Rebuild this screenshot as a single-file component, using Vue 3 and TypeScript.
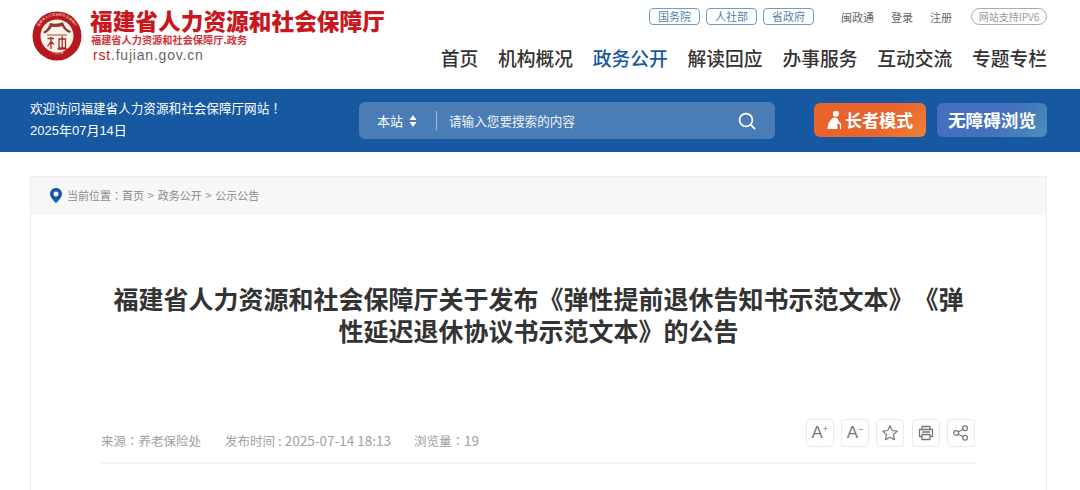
<template>
<div class="page">
  <header class="head">
    <div class="brand">
      <svg class="logo" viewBox="0 0 50 50" width="50" height="50">
        <circle cx="25" cy="25" r="24.5" fill="#b5181d" />
        <circle cx="25" cy="25" r="16.5" fill="#fbf3ea" />
        <defs>
          <path id="ring-top" d="M5.5 29 A20 20 0 1 1 44.5 29" />
          <path id="ring-bottom" d="M11 38 A20.5 20.5 0 0 0 39 38" />
        </defs>
        <text class="ring-text"><textPath href="#ring-top" startOffset="50%" text-anchor="middle">福建省人力资源和社会保障厅</textPath></text>
        <text class="ring-text"><textPath href="#ring-bottom" startOffset="50%" text-anchor="middle">人力社保</textPath></text>
        <path d="M11 21 C15 19 17 15 18 12 C22 13 27 13 31 11 C32 15 35 19 39 20 L38 22 C35 21.5 32 19 30 15 C27 16 23 16.5 20 15.5 C18.5 18.5 15.5 21.5 12.5 22.5 Z" fill="#8c3a32" />
        <path d="M15 24 H35" stroke="#8c3a32" stroke-width=".9" />
        <path d="M15.5 27.5 H22 M19 26 V38 M19 30.5 L15.5 35.5 M19 30.5 L22 33.5 M27 28 H33.5 V37 H27 Z M30.2 25 V37 M25.5 38 H35" stroke="#9e2a25" stroke-width="1.3" fill="none" />
      </svg>
      <div class="brand-text">
        <div class="brand-name">福建省人力资源和社会保障厅</div>
        <div class="brand-sub">福建省人力资源和社会保障厅.政务</div>
        <div class="brand-url"><span class="red">rst</span>.fujian.gov.cn</div>
      </div>
    </div>
    <div class="head-right">
      <div class="top-links">
        <a v-for="l in govLinks" :key="l" class="gov-link">{{ l }}</a>
        <a class="plain first">闽政通</a>
        <a class="plain">登录</a>
        <a class="plain">注册</a>
        <span class="ipv6">网站支持IPV6</span>
      </div>
      <nav class="nav">
        <a v-for="n in navItems" :key="n" :class="['nav-item', n === '政务公开' ? 'active' : '']">{{ n }}</a>
      </nav>
    </div>
  </header>

  <section class="band">
    <div class="welcome">
      <div>欢迎访问福建省人力资源和社会保障厅网站<span class="mid">！</span></div>
      <div class="date">2025年07月14日</div>
    </div>
    <div class="search">
      <span class="scope">本站</span>
      <svg class="updown" viewBox="0 0 8 12" width="8" height="12">
        <path d="M4 0 L7.5 5 H.5 Z M4 12 L.5 7 H7.5 Z" fill="#fff" />
      </svg>
      <span class="sep"></span>
      <span class="placeholder">请输入您要搜索的内容</span>
      <svg class="glass" viewBox="0 0 18 18" width="18" height="18">
        <circle cx="8" cy="8" r="6.4" fill="none" stroke="#fff" stroke-width="1.7" />
        <path d="M12.6 12.6 L16.6 16.6" stroke="#fff" stroke-width="1.8" stroke-linecap="round" />
      </svg>
    </div>
    <a class="mode elder">
      <svg viewBox="0 0 16 20" width="15" height="19">
        <circle cx="9.5" cy="3.8" r="3.2" fill="#fff" />
        <path d="M7 8 C10 7.5 12 9 12.5 12 L15 14.5 L15 20 H13.8 L13.8 15.5 L11 14 L11 20 H.5 C.5 15 3 10 7 8 Z" fill="#fff" />
      </svg>
      长者模式
    </a>
    <a class="mode access">无障碍浏览</a>
  </section>

  <main class="card">
    <div class="crumbs">
      <svg viewBox="0 0 12 15" width="12" height="15">
        <path fill-rule="evenodd" d="M6 0 C9.4 0 12 2.6 12 5.8 C12 9.5 8 13 6 15 C4 13 0 9.5 0 5.8 C0 2.6 2.6 0 6 0 Z M6 3.4 A2.5 2.5 0 1 0 6 8.4 A2.5 2.5 0 1 0 6 3.4 Z" fill="#1659a1" />
      </svg>
      <span>当前位置<span class="mid">：</span>首页 &gt; 政务公开 &gt; 公示公告</span>
    </div>
    <div class="article">
      <h1 class="title">福建省人力资源和社会保障厅关于发布《弹性提前退休告知书示范文本》《弹性延迟退休协议书示范文本》的公告</h1>
      <div class="meta">
        <span class="meta-item">来源<span class="mid">：</span>养老保险处</span>
        <span class="meta-item">发布时间<span class="num"> : 2025-07-14 18:13</span></span>
        <span class="meta-item views">浏览量<span class="mid">：</span><span class="num">19</span></span>
        <div class="tools">
          <button class="tool"><span class="a">A</span><sup>+</sup></button>
          <button class="tool"><span class="a">A</span><sup>−</sup></button>
          <button class="tool">
            <svg viewBox="0 0 18 18" width="18" height="18">
              <path d="M9 1.8 L11.2 6.5 L16.2 7.1 L12.5 10.6 L13.5 15.7 L9 13.2 L4.5 15.7 L5.5 10.6 L1.8 7.1 L6.8 6.5 Z" fill="none" stroke="#777" stroke-width="1.2" stroke-linejoin="round" />
            </svg>
          </button>
          <button class="tool">
            <svg viewBox="0 0 18 18" width="18" height="18">
              <path d="M5 5.5 V2.5 H13 V5.5 M5 12.5 H2.5 V5.5 H15.5 V12.5 H13 M5 10.5 H13 V15.5 H5 Z M5 8 H13" fill="none" stroke="#777" stroke-width="1.3" stroke-linejoin="round" />
            </svg>
          </button>
          <button class="tool">
            <svg viewBox="0 0 18 18" width="18" height="18">
              <circle cx="4.2" cy="9" r="2.4" fill="none" stroke="#777" stroke-width="1.2" />
              <circle cx="13" cy="4.2" r="2.4" fill="none" stroke="#777" stroke-width="1.2" />
              <circle cx="13" cy="13.8" r="2.4" fill="none" stroke="#777" stroke-width="1.2" />
              <path d="M6.3 7.9 L10.9 5.3 M6.3 10.1 L10.9 12.7" stroke="#777" stroke-width="1.2" />
            </svg>
          </button>
        </div>
      </div>
    </div>
  </main>
</div>
</template>

<script setup lang="ts">
const govLinks: string[] = ['国务院', '人社部', '省政府'];
const navItems: string[] = ['首页', '机构概况', '政务公开', '解读回应', '办事服务', '互动交流', '专题专栏'];
</script>

<style>
html, body {
  margin: 0;
  background: #fff;
  overflow: hidden;
}
</style>

<style scoped>
.page {
  width: 1080px;
  height: 490px;
  overflow: hidden;
  font-family: "Noto Sans CJK SC", "Liberation Sans", sans-serif;
  color: #333;
  text-spacing-trim: space-all;
}
.mid {
  font-family: "Noto Sans CJK TC", sans-serif;
}
.head {
  display: flex;
  justify-content: space-between;
  height: 89px;
  padding: 0 33px 0 32px;
}
.brand {
  display: flex;
  gap: 8px;
  padding-top: 11px;
}
.logo {
  flex: none;
}
.ring-text {
  font-size: 3.4px;
  fill: #f6dcc0;
}
.brand-text {
  margin-top: -4px;
}
.brand-name {
  font-family: "Noto Sans CJK SC", serif;
  font-size: 22.7px;
  line-height: 27px;
  font-weight: 900;
  color: #c8171e;
  white-space: nowrap;
}
.brand-sub {
  margin-left: 1px;
  font-size: 10.2px;
  line-height: 12px;
  font-weight: 700;
  color: #d0343a;
  white-space: nowrap;
}
.brand-url {
  margin: 1px 0 0 3px;
  font-family: "Liberation Sans", sans-serif;
  font-size: 14px;
  line-height: 16px;
  letter-spacing: .8px;
  color: #666;
}
.red {
  color: #c8171e;
}
.head-right {
  display: flex;
  flex-direction: column;
  align-items: flex-end;
}
.top-links {
  display: flex;
  align-items: center;
  height: 17px;
  margin-top: 8px;
  font-size: 11px;
}
.gov-link {
  width: 51px;
  height: 17px;
  box-sizing: border-box;
  margin-right: 6px;
  border: 1px solid #6f9ccc;
  border-radius: 4px;
  color: #557fa8;
  line-height: 14px;
  text-align: center;
}
.plain {
  color: #666;
  margin-right: 17px;
}
.plain.first {
  margin-left: 21px;
}
.ipv6 {
  width: 76px;
  height: 17px;
  box-sizing: border-box;
  margin-left: 2px;
  border: 1px solid #aaa;
  border-radius: 9px;
  color: #999;
  font-size: 10px;
  line-height: 15px;
  text-align: center;
}
.nav {
  display: flex;
  gap: 19.8px;
  margin-top: 19px;
}
.nav-item {
  font-size: 18.75px;
  line-height: 28px;
  font-weight: 500;
  color: #333;
}
.nav-item.active {
  color: #1659a1;
}
.band {
  display: flex;
  align-items: center;
  height: 63px;
  padding: 0 33px 0 30px;
  background: #1659a1;
  color: #fff;
}
.welcome {
  width: 329px;
  margin-bottom: 2px;
  font-size: 12.6px;
  line-height: 22px;
}
.date {
  margin-top: 1px;
  font-family: "Liberation Sans", "Noto Sans CJK SC", sans-serif;
  font-size: 13px;
}
.search {
  display: flex;
  align-items: center;
  width: 416px;
  height: 37px;
  box-sizing: border-box;
  padding: 0 19px 0 18px;
  border-radius: 6px;
  background: #4a7cb5;
  font-size: 13px;
}
.updown {
  margin-left: 6px;
}
.sep {
  width: 1px;
  height: 19px;
  margin: 0 12px 0 19px;
  background: #9fbbd9;
}
.placeholder {
  flex: 1;
  font-size: 12.6px;
  color: #f0f4f9;
}
.mode {
  display: flex;
  align-items: center;
  justify-content: center;
  height: 34px;
  margin: 0 0 2px 11px;
  border-radius: 6px;
  font-weight: 700;
  color: #fff;
}
.elder {
  width: 112px;
  margin-left: 39px;
  gap: 3px;
  font-size: 17px;
  background: linear-gradient(135deg, #e8642c 60%, #ee8238);
}
.access {
  width: 110px;
  font-size: 17.6px;
  background: linear-gradient(135deg, #4470bd 55%, #4b90b8);
}
.card {
  margin: 24px 33px 0 30px;
  border: 1px solid #eee;
  border-bottom: 0;
  height: 330px;
}
.crumbs {
  display: flex;
  align-items: center;
  gap: 5px;
  height: 38px;
  padding: 0 0 2px 19px;
  box-sizing: border-box;
  background: #f7f7f7;
  font-size: 11px;
  word-spacing: 1.3px;
  color: #8a8a8a;
}
.article {
  padding: 0 70px;
}
.title {
  margin: 67px 10px 0;
  font-size: 25px;
  line-height: 32px;
  font-weight: 700;
  color: #333;
  text-align: center;
}
.meta {
  display: flex;
  align-items: center;
  gap: 23px;
  margin-top: 69px;
  padding-bottom: 12px;
  border-bottom: 2px solid #f5f5f5;
  font-size: 12.5px;
  color: #a0a0a0;
}
.meta-item {
  padding-top: 16px;
  line-height: 18px;
}
.meta-item:first-child {
  margin-right: 1px;
}
.num {
  font-size: 13.5px;
}
.tools {
  display: flex;
  gap: 7.3px;
  margin: 0 1px 0 auto;
}
.tool {
  display: flex;
  align-items: center;
  justify-content: center;
  width: 28px;
  height: 28px;
  padding: 0;
  border: 1px solid #eaeaea;
  border-radius: 4px;
  background: #fff;
  color: #777;
  font-family: "Liberation Sans", sans-serif;
}
.a {
  font-size: 17px;
  line-height: 20px;
}
sup {
  font-size: 9px;
  line-height: 10px;
  margin-bottom: 8px;
}
</style>
